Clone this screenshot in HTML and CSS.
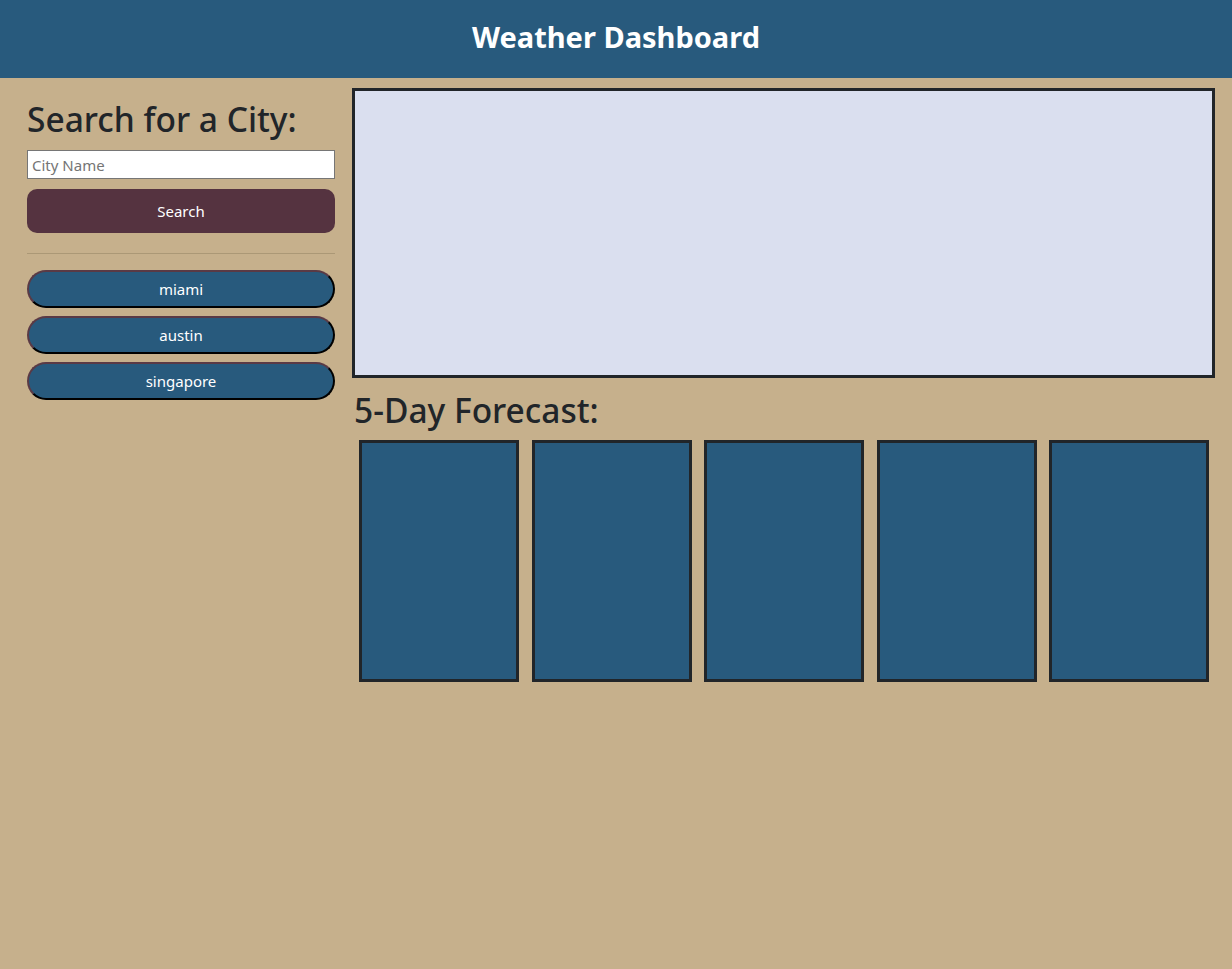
FILE: index.html
```html
<!DOCTYPE html>
<html lang="en">
<head>
<meta charset="utf-8">
<title>Weather Dashboard</title>
<link rel="stylesheet" href="styles.css">
</head>
<body>
<header class="top-bar">
  <h1 class="top-title">Weather Dashboard</h1>
</header>
<main class="layout">
  <aside class="sidebar">
    <h2 class="section-title">Search for a City:</h2>
    <input class="city-input" type="text" placeholder="City Name">
    <button class="search-btn" type="button">Search</button>
    <hr class="divider">
    <div class="history">
      <button class="city-btn" type="button">miami</button>
      <button class="city-btn" type="button">austin</button>
      <button class="city-btn" type="button">singapore</button>
    </div>
  </aside>
  <section class="content">
    <div class="current-box"></div>
    <h2 class="section-title forecast-title">5-Day Forecast:</h2>
    <div class="cards">
      <div class="card"></div>
      <div class="card"></div>
      <div class="card"></div>
      <div class="card"></div>
      <div class="card"></div>
    </div>
  </section>
</main>
</body>
</html>
```
FILE: styles.css
```css
* { box-sizing: border-box; }
html, body { margin: 0; padding: 0; }
body {
  background: #c6b08c;
  font-family: "Noto Sans", "Open Sans", sans-serif;
  color: #212529;
  min-height: 969px;
}
.top-bar {
  background: #285a7d;
  height: 78px;
  display: flex;
  align-items: center;
  justify-content: center;
  padding-bottom: 6px;
}
.top-title {
  margin: 0;
  color: #fff;
  font-size: 29px;
  font-weight: 700;
  line-height: 1;
}
.layout {
  display: flex;
  gap: 17px;
  padding: 10px 17px 0 27px;
}
.sidebar {
  width: 308px;
  flex: none;
  display: flex;
  flex-direction: column;
  padding-top: 11px;
}
.section-title {
  margin: 0;
  font-size: 33.5px;
  font-weight: 500;
  line-height: 1.2;
  color: #212529;
}
.city-input {
  margin-top: 11px;
  height: 29px;
  width: 100%;
  border: 1px solid #767676;
  background: #fff;
  font-family: inherit;
  font-size: 15px;
  padding: 0 4px;
  color: #212529;
}
.city-input::placeholder { color: #757575; }
.search-btn {
  margin-top: 10px;
  height: 44px;
  width: 100%;
  border: none;
  border-radius: 10px;
  background: #553340;
  color: #fff;
  font-family: inherit;
  font-size: 15px;
}
.divider {
  margin: 20px 0 16px;
  border: 0;
  border-top: 1px solid #ab9876;
}
.history {
  display: flex;
  flex-direction: column;
  gap: 8px;
}
.city-btn {
  height: 38px;
  width: 100%;
  border-radius: 19px;
  border: 2px solid;
  border-color: #5a3a45 #000 #000 #5a3a45;
  background: #285a7d;
  color: #fff;
  font-family: inherit;
  font-size: 15px;
}
.content {
  flex: 1;
  display: flex;
  flex-direction: column;
}
.current-box {
  height: 290px;
  border: 3px solid #212529;
  background: #dadfef;
}
.forecast-title {
  margin: 12px 0 0 2px;
}
.cards {
  display: flex;
  gap: 12.5px;
  padding: 10px 6px 0 7px;
}
.card {
  flex: 1;
  height: 242px;
  border: 3px solid #212529;
  background: #285a7d;
}
```
